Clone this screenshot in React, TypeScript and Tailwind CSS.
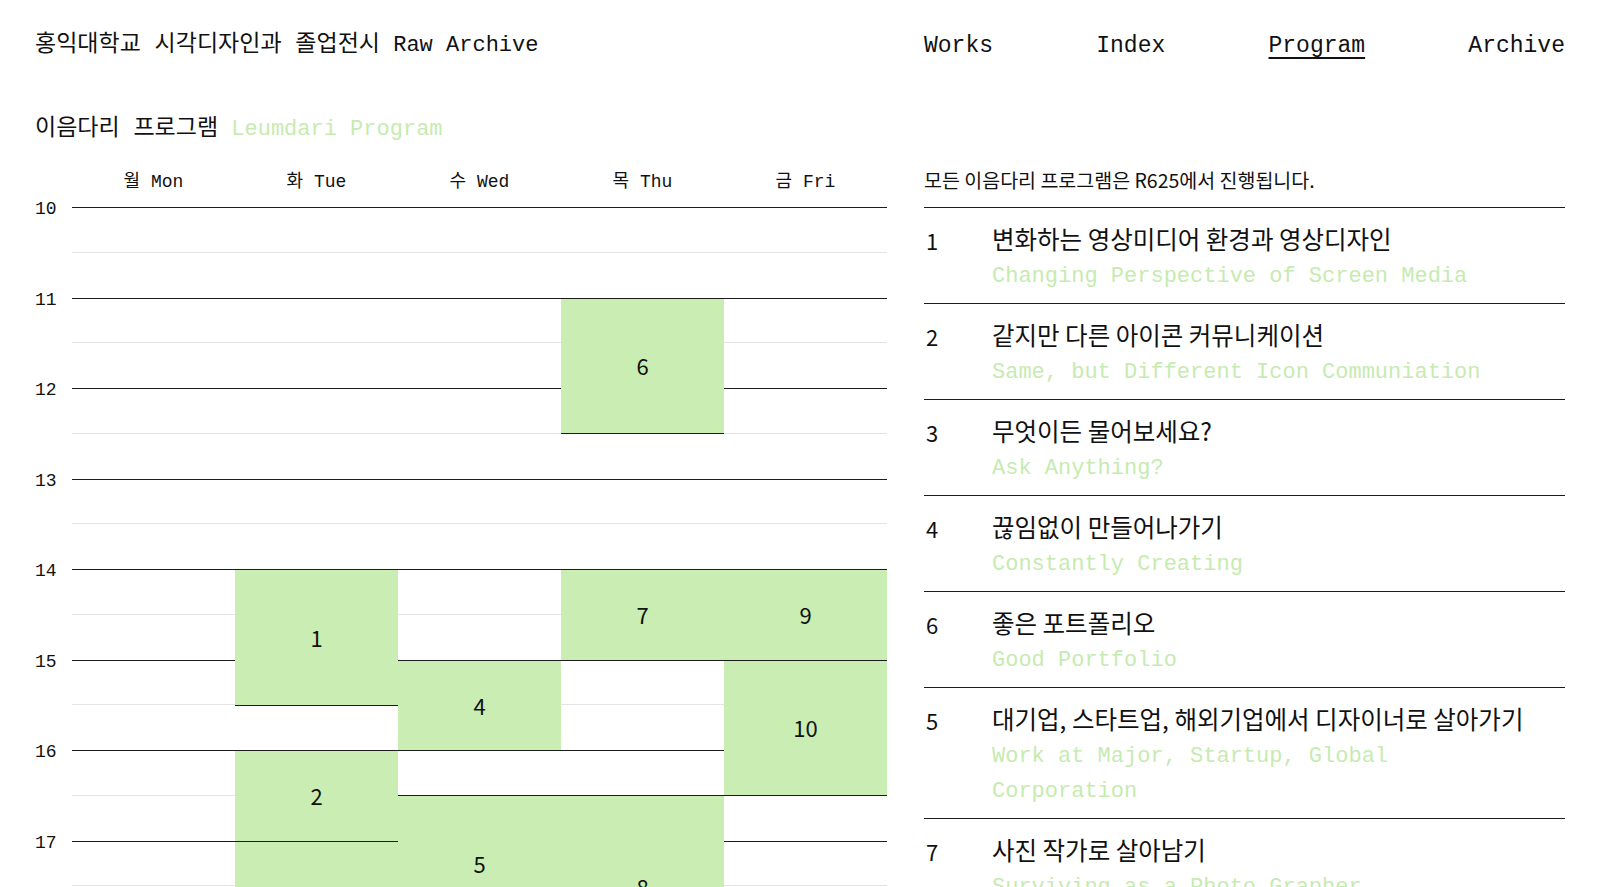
import React from 'react'

const MONO = "font-['Liberation_Mono','Noto_Sans_CJK_KR',monospace]"
const SANS = "font-['Noto_Sans_CJK_KR','Noto_Sans',sans-serif]"

const HOUR = 90.5
const COL = 163
const FIRST_HOUR = 10

const days = [
  ['월', 'Mon'],
  ['화', 'Tue'],
  ['수', 'Wed'],
  ['목', 'Thu'],
  ['금', 'Fri'],
]

const hours = [10, 11, 12, 13, 14, 15, 16, 17, 18, 19]

// day index 0 = Mon
const sessions = [
  { n: 1, day: 1, start: 14, end: 15.5 },
  { n: 2, day: 1, start: 16, end: 17 },
  { n: 3, day: 1, start: 17, end: 18.5 },
  { n: 4, day: 2, start: 15, end: 16 },
  { n: 5, day: 2, start: 16.5, end: 18 },
  { n: 6, day: 3, start: 11, end: 12.5 },
  { n: 7, day: 3, start: 14, end: 15 },
  { n: 8, day: 3, start: 16.5, end: 18.5 },
  { n: 9, day: 4, start: 14, end: 15 },
  { n: 10, day: 4, start: 15, end: 16.5 },
]

const programs = [
  { n: 1, ko: '변화하는 영상미디어 환경과 영상디자인', en: 'Changing Perspective of Screen Media' },
  { n: 2, ko: '같지만 다른 아이콘 커뮤니케이션', en: 'Same, but Different Icon Communiation' },
  { n: 3, ko: '무엇이든 물어보세요?', en: 'Ask Anything?' },
  { n: 4, ko: '끊임없이 만들어나가기', en: 'Constantly Creating' },
  { n: 6, ko: '좋은 포트폴리오', en: 'Good Portfolio' },
  { n: 5, ko: '대기업, 스타트업, 해외기업에서 디자이너로 살아가기', en: 'Work at Major, Startup, Global Corporation' },
  { n: 7, ko: '사진 작가로 살아남기', en: 'Surviving as a Photo Grapher' },
  { n: 8, ko: '브랜드 디자이너의 하루', en: 'A Day of Brand Designer' },
  { n: 9, ko: '타입 디자인 이야기', en: 'Talking about Type Design' },
  { n: 10, ko: '졸업 이후의 작업', en: 'Works after Graduation' },
]

function Schedule() {
  return (
    <div>
      {/* weekday header */}
      <div className="flex h-[61px] items-end pb-[13px] pl-[37px]">
        {days.map(([ko, en]) => (
          <div key={en} className={`w-[163px] text-center text-[18px] leading-[24px] text-[#111] ${MONO}`}>
            {ko} {en}
          </div>
        ))}
      </div>

      <div className="flex">
        {/* hour labels */}
        <div className="w-[37px]">
          {hours.map(h => (
            <div key={h} className="h-[90.5px]">
              <span className={`block -translate-y-[42%] text-[18px] leading-[20px] text-[#111] ${MONO}`}>{h}</span>
            </div>
          ))}
        </div>

        {/* grid + sessions */}
        <div className="relative w-[815px]">
          {hours.map(h => (
            <div key={h} className="h-[90.5px] border-t border-[#1c1c1c]">
              <div className="h-[44.5px] border-b border-[#e4e4e4]" />
            </div>
          ))}

          {sessions.map(s => (
            <div
              key={s.n}
              className="absolute flex items-center justify-center border-y border-[#1c1c1c] bg-[#c9edb2]"
              style={{
                top: (s.start - FIRST_HOUR) * HOUR,
                height: (s.end - s.start) * HOUR + 1,
                left: s.day * COL,
                width: COL,
              }}
            >
              <span className={`text-[22px] text-[#111] ${SANS}`}>{s.n}</span>
            </div>
          ))}
        </div>
      </div>
    </div>
  )
}

function ProgramList() {
  return (
    <div>
      <div className={`flex h-[61px] items-end pb-[15px] text-[19.5px] leading-[24px] text-[#111] ${SANS}`}>
        모든 이음다리 프로그램은 R625에서 진행됩니다.
      </div>
      <ul className="border-t border-[#1c1c1c]">
        {programs.map(p => (
          <li key={p.n} className="flex border-b border-[#1c1c1c] pt-[13px] pb-[9px]">
            <span className={`mt-[2px] w-[68px] shrink-0 pl-[2px] text-[22px] leading-[35px] text-[#111] ${SANS}`}>{p.n}</span>
            <div>
              <p className={`text-[24.5px] leading-[35px] text-[#111] ${SANS}`}>{p.ko}</p>
              <p className={`mt-[3px] max-w-[520px] text-[22px] leading-[35px] text-[#c6ebb0] ${MONO}`}>{p.en}</p>
            </div>
          </li>
        ))}
      </ul>
    </div>
  )
}

export default function App() {
  return (
    <div className="min-h-screen bg-white pt-[3px] pl-[35px] pr-[35px] text-[#111]">
      <header className="flex h-[85px] items-center justify-between">
        <a className={`text-[22px] leading-[30px] ${MONO}`}>
          <span className="text-[23px]">홍익대학교 시각디자인과 졸업전시</span> Raw Archive
        </a>
        <nav className={`flex w-[641px] justify-between text-[23px] leading-[30px] ${MONO}`}>
          <a>Works</a>
          <a>Index</a>
          <a className="underline decoration-2 underline-offset-[5px]">Program</a>
          <a>Archive</a>
        </nav>
      </header>

      <h1 className={`mt-[25px] text-[22px] leading-[33px] ${MONO}`}>
        <span className="text-[23px]">이음다리 프로그램</span> <span className="text-[#c6ebb0]">Leumdari Program</span>
      </h1>

      <div className="flex gap-[37px]">
        <div className="w-[852px] shrink-0">
          <Schedule />
        </div>
        <div className="w-[641px]">
          <ProgramList />
        </div>
      </div>
    </div>
  )
}
